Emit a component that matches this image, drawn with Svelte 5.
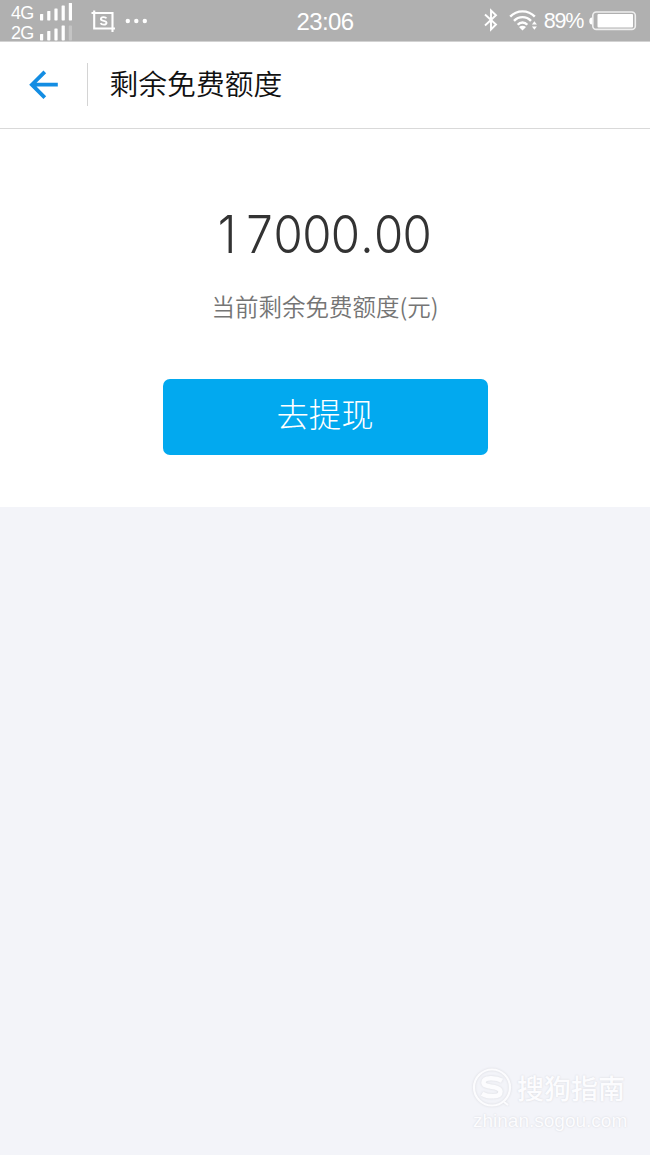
<script>
  const networks = [
    { name: '4G', bars: [6.5, 9.5, 12, 15, 17.5], dim: 0 },
    { name: '2G', bars: [6.5, 9.5, 12, 15, 15], dim: 1 }
  ];
  const amount = '17000.00';
</script>

<div class="screen">
  <div class="status">
    <div class="left">
      <div class="networks">
        {#each networks as net}
          <div class="network">
            <span>{net.name}</span>
            <svg width="33" height="19" viewBox="0 0 33 19">
              {#each net.bars as h, i}
                <rect x={i * 7.2} y={17.4 - h} width="3.2" height={h} rx=".6" fill="#fff" opacity={net.dim && i === 4 ? 0.25 : 1} />
              {/each}
            </svg>
          </div>
        {/each}
      </div>
      <svg class="shot" width="25" height="23" viewBox="0 0 25 23" fill="none" stroke="#fff" stroke-width="2.1">
        <path d="M0.5 3H21.5V22M3.2 0.5V18.5H24" />
        <path d="M15.4 8.4C14.6 6.7 9.9 6.5 9.9 9C9.9 11.6 15.5 10.2 15.5 12.8C15.5 15.4 10.4 15 9.6 13.2" stroke-width="1.9" />
      </svg>
      <svg class="dots" width="23" height="6" viewBox="0 0 23 6" fill="#fff">
        <circle cx="2.8" cy="3" r="2.2" /><circle cx="11.3" cy="3" r="2.2" /><circle cx="19.8" cy="3" r="2.2" />
      </svg>
    </div>
    <time>23:06</time>
    <div class="right">
      <svg class="bt" width="14" height="24" viewBox="0 0 14 24" fill="none" stroke="#fff" stroke-width="1.9">
        <path d="M1 6.5L12 16.5L7 21.5V2.5L12 7.3L1 17.5" />
      </svg>
      <svg class="wifi" width="28" height="22" viewBox="0 0 28 22" fill="none" stroke="#fff" stroke-width="2.4">
        <path d="M1.2 7.6C8 0.6 19 0.6 25.8 7.6M5 11.9C9.7 6.8 17.3 6.8 22 11.9M8.7 15.8C11.4 12.7 15.6 12.7 18.3 15.8" />
        <path d="M10 18Q13.5 15.6 17 18L13.5 21.4ZM22.9 15.6L25.4 12.2L27.9 15.6ZM22.9 17.4L25.4 20.8L27.9 17.4Z" fill="#fff" stroke="none" />
      </svg>
      <span class="pct">89%</span>
      <svg class="battery" width="48" height="20" viewBox="0 0 48 20">
        <path d="M3 6.5Q0.3 6.5 0.3 10T3 13.5Z" fill="#fff" />
        <rect x="3.8" y="1" width="42.5" height="17.4" rx="3.5" fill="none" stroke="#fff" stroke-opacity=".8" stroke-width="1.6" />
        <rect x="8.5" y="3" width="35.5" height="13.4" rx="1" fill="#fff" />
      </svg>
    </div>
  </div>

  <header>
    <svg class="back" width="30" height="30" viewBox="0 0 30 30" fill="none" stroke="#138de3" stroke-width="3.8">
      <path d="M16.8 1.8L3.9 14.7L16.8 27.6M3.9 14.7H29.8" />
    </svg>
    <i class="divider"></i>
    <h1>剩余免费额度</h1>
  </header>

  <main>
    <div class="amount">{#each amount as ch}<span class:point={ch === '.'} class:one={ch === '1'}>{ch}</span>{/each}</div>
    <p>当前剩余免费额度(元)</p>
    <button>去提现</button>
  </main>

  <footer>
    <div class="brand">
      <svg width="40" height="40" viewBox="0 0 40 40" fill="none" stroke="#fcfcfe">
        <circle cx="20" cy="19.5" r="18" stroke-width="2.2" />
        <path d="M30 12.7C24 9.5 11.5 9 11.5 14.5C11.5 20.5 28.5 17 28.5 23.8C28.5 30 15.5 29 10 25.7" stroke-width="4.5" />
        <path d="M32 34L36 37" stroke-width="2" />
      </svg>
      <span>搜狗指南</span>
    </div>
    <div class="site">zhinan.sogou.com</div>
  </footer>
</div>

<style>
  :global(body) { background: #f3f4f9; }
  .screen {
    width: 650px;
    height: 1155px;
    display: flex;
    flex-direction: column;
    background: #f3f4f9;
    font-family: "Noto Sans CJK SC", sans-serif;
    overflow: hidden;
  }
  svg { display: block; flex: none; }
  .status {
    height: 41px;
    flex: none;
    display: grid;
    grid-template-columns: 1fr auto 1fr;
    background: #b0b0b0;
    border-bottom: 1px solid #d2d2d2;
    color: #fff;
    font-family: "Liberation Sans", sans-serif;
  }
  .left, .right { display: flex; align-items: flex-start; }
  .networks { padding: 3px 0 0 11px; }
  .network {
    display: flex;
    height: 20px;
    font-size: 18px;
    line-height: 20px;
    letter-spacing: -0.8px;
  }
  .network span { width: 29px; }
  .shot { margin: 10px 0 0 18px; }
  .dots { margin: 18px 0 0 9px; }
  time {
    font-size: 24px;
    line-height: 43px;
    letter-spacing: -0.6px;
  }
  .right { justify-content: flex-end; padding-right: 13px; }
  .bt { margin: 8px 11px 0 0; }
  .wifi { margin: 9px 7px 0 0; }
  .pct { font-size: 21.5px; line-height: 43px; letter-spacing: -1.3px; margin-right: 6px; }
  .battery { margin-top: 11px; }
  header {
    height: 86px;
    flex: none;
    display: flex;
    align-items: center;
    padding-left: 28px;
    background: #fff;
    border-bottom: 1px solid #d9d9d9;
  }
  .divider { width: 1px; height: 43px; background: #d4d4d4; margin: 0 22px 1px 29px; }
  h1 { margin: 0 0 0 -0.5px; padding-bottom: 4px; font-size: 28.8px; line-height: 40px; font-weight: 350; color: #111; }
  main {
    height: 378px;
    flex: none;
    display: flex;
    flex-direction: column;
    align-items: center;
    background: #fff;
  }
  .amount {
    display: flex;
    margin: 70px 2px 0 0;
    height: 70px;
    line-height: 70px;
    font-family: Inter, sans-serif;
    font-weight: 300;
    font-size: 51.5px;
    color: #333;
    transform: scaleX(0.92);
  }
  .amount span { display: flex; justify-content: center; width: 31.2px; }
  .amount .point { width: 15.6px; }
  .amount .one { box-sizing: border-box; padding-right: 8px; }
  p { margin: 20px 0 0; font-size: 23.5px; line-height: 34px; font-weight: 350; color: #757575; }
  button {
    margin: 56px 0 0;
    width: 325px;
    height: 76px;
    padding: 0 0 8px;
    border: 0;
    border-radius: 7px;
    background: #02a9ef;
    color: #fff;
    font: 300 32.4px/68px "Noto Sans CJK SC", sans-serif;
  }
  footer {
    margin: auto 22px 21px auto;
    width: 156px;
    color: #fcfcfe;
    text-shadow: 0 0 2px #d4d5da;
  }
  footer svg { filter: drop-shadow(0 0 1px #d8d9de); }
  .brand { display: flex; align-items: center; gap: 5px; font-size: 27px; font-weight: 500; line-height: 40px; white-space: nowrap; }
  .site { font: 19px/26px "Liberation Sans", sans-serif; padding-left: 1px; }
</style>
